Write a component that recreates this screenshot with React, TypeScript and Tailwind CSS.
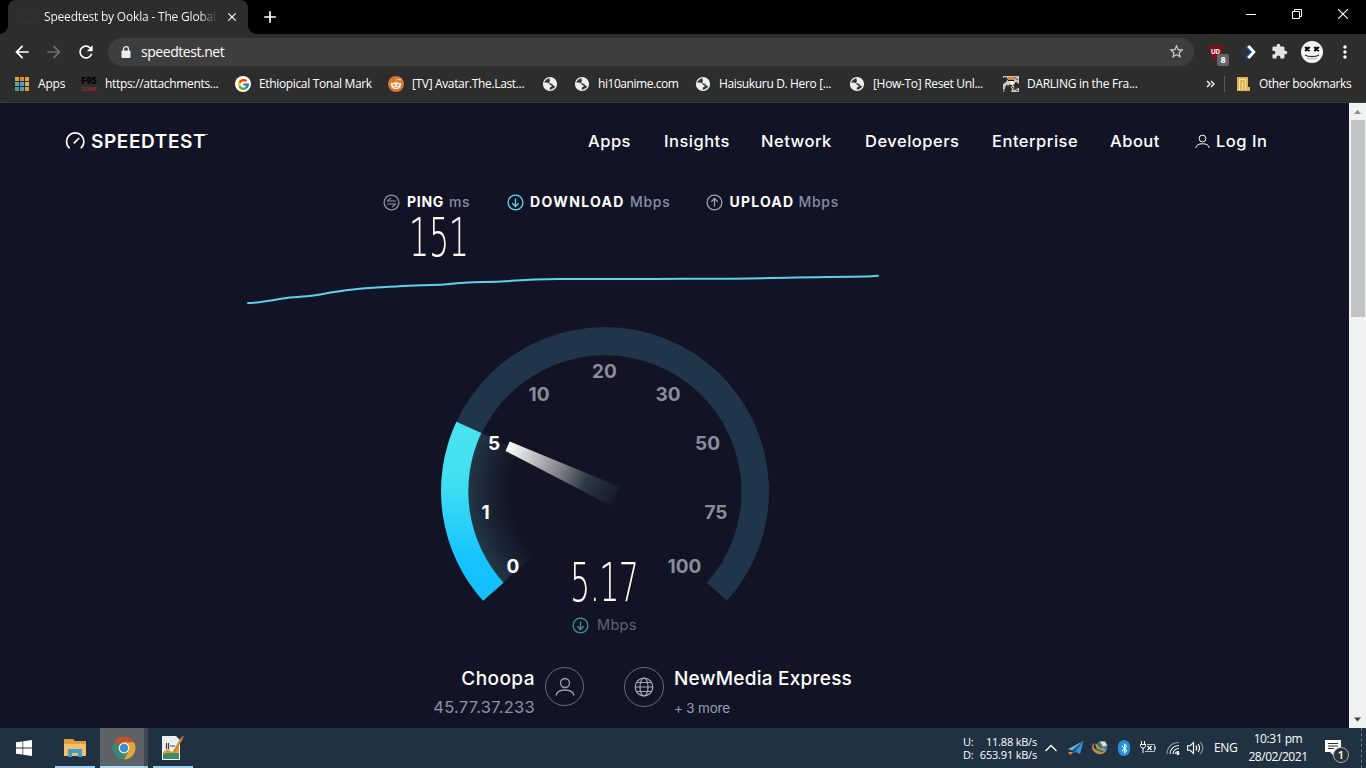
import type { ReactNode } from 'react';
import {
  MdArrowBack,
  MdArrowForward,
  MdRefresh,
  MdStarBorder,
  MdExtension,
  MdMoreVert,
  MdClose,
  MdAdd,
} from 'react-icons/md';
import { FcGoogle } from 'react-icons/fc';
import { FaRedditAlien, FaBluetoothB } from 'react-icons/fa';

/* ---------- Bookmark icons ---------- */

const appsColors = ['#e0a040', '#d98a35', '#e0a040', '#5aa9a0', '#4aa3d8', '#d9b060', '#3f9f95', '#4fa0a8', '#d9a040'];

function AppsIcon() {
  return (
    <div className="ml-[1px] grid w-[14px] grid-cols-3 gap-[1px]">
      {appsColors.map((color, i) => (
        <span key={i} className="size-[4px]" style={{ background: color }} />
      ))}
    </div>
  );
}

function F95Icon() {
  return (
    <div className="flex w-4 flex-col items-center font-['Roboto',sans-serif] font-black leading-none">
      <span className="text-[9px] leading-[9px] tracking-[-0.2px] text-black">F95</span>
      <span className="text-[6px] leading-[6px] text-[#8c2a2e]">ZONE</span>
    </div>
  );
}

function GoogleIcon() {
  return (
    <span className="flex size-4 items-center justify-center rounded-full bg-white">
      <FcGoogle size={13} />
    </span>
  );
}

function RedditIcon() {
  return (
    <span className="flex size-4 items-center justify-center rounded-full bg-[#d9762c]">
      <FaRedditAlien size={12} className="text-[#fbe9da]" />
    </span>
  );
}

function GlobeIcon() {
  return (
    <svg width="16" height="16" viewBox="0 0 16 16">
      <circle cx="8" cy="8" r="7.100" fill="#efefef" />
      <path
        d="M7.800 2.200C5 2.300 2.600 4.300 2.200 7c1.500-.6 3.500-.6 4.600.2.900.7.700 1.500 1.500 1.800.9.300 1.500.300 1.400 1.200l-1.900 1.500v2c2.300.1 4.500-1.400 5.500-3.600l-1.800-.4c-.8-.3-.6-1.600-1.600-1.900-.9-.2-2.500 0-2.700-1.200-.1-.9 1-1 .8-1.900-.2-.7-.9-.8-.2-2.500z"
        fill="#353535"
      />
    </svg>
  );
}

function AnimeIcon() {
  return (
    <svg width="16" height="16" viewBox="0 0 16 16">
      <rect width="16" height="16" fill="#c9c5c1" />
      <path d="M0 2l3-1 2 2-2 3-3 2zM10 8l3-2 3 2v4l-4 1zM3 9l4 1 2 3-1 3H1l1-3z" fill="#2b2a2d" />
      <path d="M5 1h5l2 3-3 2-4-1z" fill="#d9863c" />
      <path d="M6 5h4l2 3-4 1z" fill="#f7eee4" />
      <path d="M0 15l6-5h3M9 11l6 4M11 1l4 3M1 1l3 2M10 14l5-3" stroke="#3a3638" strokeWidth="1" fill="none" />
      <path d="M5 4.500h6M6 9l3 1" stroke="#151517" strokeWidth="1.200" />
    </svg>
  );
}

const bookmarks: { label: string; icon: ReactNode; width: string; tracking: string }[] = [
  { label: 'Apps', icon: <AppsIcon />, width: 'w-[67px]', tracking: 'tracking-[-0.2px]' },
  { label: 'https://attachments...', icon: <F95Icon />, width: 'w-[154px]', tracking: 'tracking-[-0.33px]' },
  { label: 'Ethiopical Tonal Mark', icon: <GoogleIcon />, width: 'w-[153px]', tracking: 'tracking-[-0.35px]' },
  { label: '[TV] Avatar.The.Last...', icon: <RedditIcon />, width: 'w-[154px]', tracking: 'tracking-[-0.35px]' },
  { label: '', icon: <GlobeIcon />, width: 'w-[32px]', tracking: '' },
  { label: 'hi10anime.com', icon: <GlobeIcon />, width: 'w-[121px]', tracking: 'tracking-[-0.45px]' },
  { label: 'Haisukuru D. Hero [...', icon: <GlobeIcon />, width: 'w-[154px]', tracking: 'tracking-[-0.35px]' },
  { label: '[How-To] Reset Unl...', icon: <GlobeIcon />, width: 'w-[154px]', tracking: 'tracking-[-0.32px]' },
  { label: 'DARLING in the Fra...', icon: <AnimeIcon />, width: 'w-[154px]', tracking: 'tracking-[-0.28px]' },
];

/* ---------- Browser chrome ---------- */

function TabStrip() {
  return (
    <div className="flex h-[34px] bg-black pl-2">
      <div className="relative flex w-60 items-center rounded-t-lg bg-[#2d2d2d] pl-3">
        <span className="absolute bottom-0 -left-2 size-2 bg-[radial-gradient(circle_at_0_0,#000_7.5px,#2d2d2d_8px)]" />
        <span className="absolute -right-2 bottom-0 size-2 bg-[radial-gradient(circle_at_100%_0,#000_7.5px,#2d2d2d_8px)]" />
        <span className="size-[14px] rounded-full border border-dotted border-[#3b3b3b]" />
        <span className="ml-[10px] w-[173px] overflow-hidden bg-gradient-to-r from-white from-90% to-[#2d2d2d] bg-clip-text text-[12px] tracking-[-0.19px] whitespace-nowrap text-transparent">
          Speedtest by Ookla - The Global
        </span>
        <MdClose size={14} className="ml-2 text-white" />
      </div>
      <div className="ml-[12px] flex items-center">
        <MdAdd size={20} className="text-white" />
      </div>
      <div className="ml-auto flex h-7 items-center gap-9 pr-[18px]">
        <svg width="10" height="10" stroke="#fff">
          <path d="M0 5.500h10" />
        </svg>
        <svg width="10" height="10" stroke="#fff" fill="none">
          <path d="M0.500 2.500h7v7h-7zM2.500 2.500v-2h7v7h-2" />
        </svg>
        <svg width="10" height="10" stroke="#fff" strokeWidth="1.100">
          <path d="M0 0l10 10M10 0l-10 10" />
        </svg>
      </div>
    </div>
  );
}

function UBlockIcon() {
  return (
    <div className="relative size-4">
      <svg width="16" height="16" viewBox="0 0 16 16">
        <path d="M8 0c2 1.500 4.500 2 7.200 2 0 6-1 11-7.200 14C1.800 13 .8 8 .8 2 3.500 2 6 1.500 8 0z" fill="#7d1019" />
      </svg>
      <span className="absolute top-[4px] left-[3px] font-['Roboto',sans-serif] text-[7px] leading-[8px] font-bold text-white">UD</span>
      <span className="absolute top-[10px] left-[9px] flex h-3 w-3 items-center justify-center rounded-[2px] bg-[#61666b] font-['Open_Sans',sans-serif] text-[9px] font-bold text-white">
        8
      </span>
    </div>
  );
}

function AvatarIcon() {
  return (
    <svg width="22" height="22" viewBox="0 0 22 22">
      <circle cx="11" cy="11" r="11" fill="#f4f4f4" />
      <path d="M4.200 6l4.400 4M8.600 6l-4.400 4M13.400 6l4.400 4M17.800 6l-4.400 4" stroke="#000" strokeWidth="2.300" />
      <path d="M4 14c3.500 2.200 10.500 2.200 14 0" stroke="#333" strokeWidth="1.200" fill="none" />
      <path d="M6 16.800c3 1.500 7 1.500 10 0" stroke="#aaa" strokeWidth="1" fill="none" />
    </svg>
  );
}

function Toolbar() {
  return (
    <div className="flex h-[35px] items-center bg-[#2d2d2d] pl-[12px] text-white">
      <MdArrowBack size={20} />
      <MdArrowForward size={20} className="ml-[12px] text-[#6d6d70]" />
      <MdRefresh size={20} className="ml-[12px]" />
      <div className="ml-[12px] flex h-7 w-[1086px] items-center rounded-full bg-[#3e3e3e] pr-[9px] pl-[13px]">
        <svg width="10" height="12" viewBox="0 0 10 12">
          <path d="M2.500 5V3.200a2.500 2.500 0 0 1 5 0V5" fill="none" stroke="#ededed" strokeWidth="1.300" />
          <rect x="0.500" y="4.500" width="9" height="7.500" rx="1" fill="#ededed" />
        </svg>
        <span className="ml-[10px] text-[14px] tracking-[-0.450px]">speedtest.net</span>
        <MdStarBorder size={17} className="ml-auto text-[#d0d0d0]" />
      </div>
      <div className="ml-[14px] flex items-center">
        <UBlockIcon />
        <svg width="16" height="16" className="ml-[18px]" fill="none">
          <path d="M5 2l5.500 6L5 14" stroke="#2f6fc4" strokeWidth="3" />
          <path d="M6.500 2L12 8l-5.500 6" stroke="#fff" strokeWidth="2.600" />
          <path d="M0 5.500h5M0 8h6M0 10.500h5" stroke="#24436d" strokeDasharray="2 1" />
        </svg>
        <MdExtension size={17} className="ml-[13px] text-[#e4e4e4]" />
        <span className="ml-[13px]">
          <AvatarIcon />
        </span>
        <MdMoreVert size={20} className="ml-[12px]" />
      </div>
    </div>
  );
}

function BookmarksBar() {
  return (
    <div className="flex h-[34px] items-center border-b border-dotted border-[#45454d] bg-[#2d2d2d] pb-[3px] pl-[14px] text-[12px] text-white">
      {bookmarks.map((b, i) => (
        <div key={i} className={`flex shrink-0 items-center gap-2 whitespace-nowrap ${b.width}`}>
          <span className="flex w-4 shrink-0">{b.icon}</span>
          {b.label && <span className={b.tracking}>{b.label}</span>}
        </div>
      ))}
      <svg width="9" height="8" className="ml-auto" fill="none" stroke="#e8e8e8" strokeWidth="1.500">
        <path d="M1 1l3 3-3 3M5 1l3 3-3 3" />
      </svg>
      <span className="ml-[9px] h-4 w-px bg-[#5c5c5c]" />
      <svg width="13" height="15" className="ml-[12px]">
        <path d="M0 0h11v10h2v4H0z" fill="#e6b355" />
        <path d="M2.500 13V2.500h6V13M5.500 12V5" stroke="#f9e2ac" fill="none" />
      </svg>
      <span className="mr-[15px] ml-[9px] w-[92px] tracking-[-0.42px] whitespace-nowrap">Other bookmarks</span>
    </div>
  );
}

/* ---------- Speedtest page ---------- */

const navItems = [
  { label: 'Apps', width: 'w-11' },
  { label: 'Insights', width: 'w-[65px]' },
  { label: 'Network', width: 'w-[72px]' },
  { label: 'Developers', width: 'w-[95px]' },
  { label: 'Enterprise', width: 'w-[86px]' },
  { label: 'About', width: 'w-[53px]' },
];

function UserIcon({ size, className }: { size: number; className?: string }) {
  return (
    <svg width={size} height={size} viewBox="0 0 20 20" fill="none" stroke="currentColor" strokeWidth="1.300" className={className}>
      <circle cx="10" cy="6" r="4.500" />
      <path d="M1 18.500c.8-4 4-5.500 9-5.500s8.200 1.500 9 5.500" />
    </svg>
  );
}

function Header() {
  return (
    <header className="flex h-[76px] items-center pl-[65px]">
      <svg width="20" height="18" viewBox="0 0 20 18" fill="none" stroke="#fff" strokeWidth="1.700">
        <path d="M4.600 16.300A8.700 8.700 0 1 1 15.800 16.300" />
        <path d="M8.800 11.300l5.400-5.300" />
      </svg>
      <span className="mt-[2px] ml-[6px] flex w-[118px] text-[19px] font-semibold tracking-[0.600px] text-white">
        SPEEDTEST
        <span className="mt-[6px] -ml-px h-px w-[3px] bg-white/60" />
      </span>
      <nav className="ml-[379px] flex items-center gap-8 text-[16.500px] font-medium tracking-[0.500px] whitespace-nowrap text-white">
        {navItems.map((item) => (
          <a key={item.label} className={item.width}>
            {item.label}
          </a>
        ))}
        <a className="flex items-center gap-[6px]">
          <UserIcon size={15} />
          Log In
        </a>
      </nav>
    </header>
  );
}

function DirectionIcon({ kind, className }: { kind: 'ping' | 'down' | 'up'; className: string }) {
  return (
    <svg width="17" height="17" viewBox="0 0 17 17" fill="none" stroke="currentColor" strokeWidth="1.300" className={className}>
      <circle cx="8.500" cy="8.500" r="7.400" />
      {kind === 'ping' && <path d="M13 7H4.500L8 3.800M4 10h8.500L9 13.200" strokeWidth="1.100" />}
      {kind === 'down' && <path d="M8.500 4.500v8M5.300 9.300l3.200 3.200 3.200-3.200" />}
      {kind === 'up' && <path d="M8.500 12.500v-8M5.300 7.700l3.200-3.200 3.200 3.200" />}
    </svg>
  );
}

function Stats() {
  return (
    <div className="ml-[382.500px] flex h-4 items-center text-[14px] leading-4 font-bold whitespace-nowrap text-white">
      <DirectionIcon kind="ping" className="text-[#8d8fa3]" />
      <span className="ml-[7.500px] w-[42px] tracking-[0.700px]">PING</span>
      <span className="w-[57.500px] font-medium tracking-[0.500px] text-[#8390a6]">ms</span>
      <DirectionIcon kind="down" className="text-[#5fd8ef]" />
      <span className="ml-[6.500px] w-[100px] tracking-[1.350px]">DOWNLOAD</span>
      <span className="w-[75.500px] font-medium tracking-[0.700px] text-[#8390a6]">Mbps</span>
      <DirectionIcon kind="up" className="text-[#9da0b2]" />
      <span className="ml-[7px] w-[69px] tracking-[1.200px]">UPLOAD</span>
      <span className="font-medium tracking-[0.700px] text-[#8390a6]">Mbps</span>
    </div>
  );
}

function PingGraph() {
  return (
    <svg width="640" height="40" viewBox="240 270 640 40" className="mt-[9px] ml-[240px] block">
      <path
        d="M248 303C256 303 268 301 281 298.700S302 297 311.500 295.700 330 292.500 346 290.300 380 287.500 399 286.300 438 285.500 452 283.700 490 282.300 505 281.300 530 279.300 558 279 630 279.200 656 279 740 278.800 770 278 830 276.900 852 276.700 872 276.200 878 275.800"
        fill="none"
        stroke="#5cd3e8"
        strokeWidth="2"
        strokeLinecap="round"
      />
    </svg>
  );
}

const marks = [
  { value: '0', x: 513, y: 573, active: true },
  { value: '1', x: 485.500, y: 519, active: true },
  { value: '5', x: 494, y: 450, active: true },
  { value: '10', x: 539, y: 401, active: false },
  { value: '20', x: 604.500, y: 378, active: false },
  { value: '30', x: 668, y: 401, active: false },
  { value: '50', x: 707.500, y: 450, active: false },
  { value: '75', x: 716, y: 519, active: false },
  { value: '100', x: 684.500, y: 573, active: false },
];

function Gauge() {
  return (
    <div className="relative mt-[10px] ml-[430px] h-[290px] w-[350px]">
      <svg width="350" height="290" viewBox="430 320 350 290" className="block">
        <defs>
          <linearGradient id="active" x1="0" y1="0" x2="0" y2="1">
            <stop offset="0" stopColor="#4be3ef" />
            <stop offset="0.350" stopColor="#3fdff2" />
            <stop offset="0.750" stopColor="#17c4ff" />
            <stop offset="1" stopColor="#15bfff" />
          </linearGradient>
          <radialGradient id="glow" gradientUnits="userSpaceOnUse" cx="605" cy="491" r="137">
            <stop offset="0.680" stopColor="#213342" stopOpacity="0" />
            <stop offset="0.850" stopColor="#213342" stopOpacity="0.500" />
            <stop offset="1" stopColor="#233846" />
          </radialGradient>
          <linearGradient id="needle" gradientUnits="userSpaceOnUse" x1="507" y1="446" x2="616" y2="497">
            <stop offset="0" stopColor="#fff" />
            <stop offset="0.120" stopColor="#e2e2e4" />
            <stop offset="0.500" stopColor="#7b7d86" />
            <stop offset="0.720" stopColor="#2a3944" />
            <stop offset="1" stopColor="#151a29" />
          </linearGradient>
        </defs>
        <path d="M483.100 600.700A164 164 0 1 1 726.900 600.700L706.800 582.700A136.500 136.500 0 1 0 503.200 582.700Z" fill="#20344a" />
        <path d="M503.200 582.700A137 137 0 0 1 480.900 433.100L518 450A96 96 0 0 0 533.500 555Z" fill="url(#glow)" />
        <path d="M483.100 600.700A164 164 0 0 1 456.400 421.700L481.300 433.100A136.500 136.500 0 0 0 503.500 582.700Z" fill="url(#active)" />
        <path d="M509.700 441.500L619.500 486.700 612 506.300 505.500 451Z" fill="url(#needle)" />
        {marks.map((m) => (
          <text
            key={m.value}
            x={m.x}
            y={m.y}
            textAnchor="middle"
            className={`text-[19px] font-bold ${m.active ? 'fill-white' : 'fill-[#8b8c9b]'}`}
          >
            {m.value}
          </text>
        ))}
      </svg>
      <div className="absolute top-[238px] left-[140px] w-[70px]">
        <span className="block origin-left scale-x-[0.600] font-['DejaVu_Sans',sans-serif] text-[53px] leading-[50px] font-extralight tracking-[-1px] text-white">
          5.17
        </span>
      </div>
    </div>
  );
}

function ServerInfo() {
  return (
    <div className="mt-[30px] flex h-14 whitespace-nowrap">
      <div className="flex w-[535px] flex-col items-end">
        <span className="text-[19px] leading-7 font-medium tracking-[0.450px] text-white">Choopa</span>
        <span className="text-[16.500px] leading-7 tracking-[0.250px] text-[#8f91a6]">45.77.37.233</span>
      </div>
      <div className="mt-[2px] ml-[10px] flex size-[39px] items-center justify-center rounded-full border border-[#696b79] text-[#a3a5b3]">
        <UserIcon size={20} />
      </div>
      <div className="mt-[2px] ml-[40px] flex size-10 items-center justify-center rounded-full border border-[#696b79]">
        <svg width="20" height="20" viewBox="0 0 20 20" fill="none" stroke="#a3a5b3" strokeWidth="1.200">
          <circle cx="10" cy="10" r="8.800" />
          <ellipse cx="10" cy="10" rx="4" ry="8.800" />
          <path d="M1.200 10h17.600M2.500 5.500h15M2.500 14.500h15" />
        </svg>
      </div>
      <div className="ml-[10px] flex flex-col">
        <span className="text-[19px] leading-7 font-medium tracking-[0.240px] text-white">NewMedia Express</span>
        <span className="mt-px text-[13.500px] leading-7 tracking-[-0.200px] text-[#8fa0ae]">+ 3 more</span>
      </div>
    </div>
  );
}

function Scrollbar() {
  return (
    <div className="flex w-[17px] flex-col items-center justify-between bg-[#f1f3f3]">
      <div className="flex w-full flex-col items-center">
        <svg width="17" height="17">
          <path d="M5 11l3.500-4 3.500 4z" fill="#8b8f8f" />
        </svg>
        <div className="h-[197px] w-[14px] bg-[#c1c4c4]" />
      </div>
      <svg width="17" height="17">
        <path d="M5 6.500h7l-3.500 4z" fill="#3e4242" />
      </svg>
    </div>
  );
}

function SpeedtestPage() {
  return (
    <div className="flex h-[625px] bg-[#121324] font-['Inter',sans-serif]">
      <main className="w-[1349px] overflow-hidden">
        <Header />
        <div className="mt-[15px]">
          <Stats />
        </div>
        <div className="mt-[5px] ml-[409px] h-[46px] w-[60px]">
          <span className="block origin-left scale-x-[0.600] font-['DejaVu_Sans',sans-serif] text-[53px] leading-[46px] font-extralight tracking-[-0.500px] text-white">
            151
          </span>
        </div>
        <PingGraph />
        <Gauge />
        <div className="mt-[5px] ml-[572px] flex h-5 items-center gap-2 text-[14.500px] tracking-[0.300px] text-[#5f6270]">
          <DirectionIcon kind="down" className="text-[#3f9391]" />
          Mbps
        </div>
        <ServerInfo />
      </main>
      <Scrollbar />
    </div>
  );
}

/* ---------- Windows taskbar ---------- */

function TaskButtons() {
  return (
    <div className="flex h-full">
      <div className="flex w-[55px] items-center pl-4">
        <svg width="16" height="16" fill="#fff">
          <path d="M0 2.300l6.500-.9v6.200H0zM7.200 1.300L16 0v7.600H7.200zM0 8.400h6.500v6.200L0 13.700zM7.200 8.400H16V16l-8.800-1.300z" />
        </svg>
      </div>
      <div className="flex w-10 items-center justify-center border-b-2 border-[#9fcdee]">
        <svg width="22" height="20" viewBox="0 0 22 20" className="mt-[2px]">
          <path d="M0 1h9l2 2h11v15H0z" fill="#dca03e" />
          <path d="M0 6h22v12H0z" fill="#f2c069" />
          <path d="M4 19v-8h14v8h-4v-4H8v4z" fill="#3f9ed0" />
        </svg>
      </div>
      <div className="ml-[5px] flex w-11 items-center justify-center border-b-2 border-[#b4dcf5] bg-[#5d6266] pl-[3px]">
        <svg width="24" height="24" viewBox="0 0 24 24" className="mt-[2px]">
          <path d="M12 12L2.050 6.250A11.500 11.500 0 0 1 21.950 6.250L22 7H12z" fill="#c4502c" />
          <path d="M12 12L2.050 6.250A11.500 11.500 0 0 0 12 23.500L17 14z" fill="#3b8579" />
          <path d="M12 23.500A11.500 11.500 0 0 0 21.950 6.250H12L17 14z" fill="#e2a63a" />
          <circle cx="12" cy="12" r="5.400" fill="#f1efe8" />
          <circle cx="12" cy="12" r="4.200" fill="#3a8ed0" />
        </svg>
      </div>
      <div className="w-1 border-b-2 border-[#9fcdee] bg-[#3e474f]" />
      <div className="ml-[5px] flex w-10 items-center justify-center border-b-2 border-[#9fcdee]">
        <svg width="24" height="24" viewBox="0 0 24 24" className="mt-[2px]">
          <path d="M1 0h14l4 4v20H1z" fill="#eef0ee" />
          <path d="M2 16l5-3 4 3 7-7v14H2z" fill="#dc9a35" />
          <path d="M2 18c5-2 10 0 16-1v6H2z" fill="#3e8a6e" />
          <path d="M5.500 7v6M7.500 7v6M9 10h5" stroke="#3a3a3a" strokeWidth="1.200" />
          <path d="M13 16L21 2" stroke="#c98634" strokeWidth="2.400" />
          <path d="M20.500 3l1.800-3" stroke="#80616c" strokeWidth="2.400" />
        </svg>
      </div>
    </div>
  );
}

function Tray() {
  return (
    <div className="ml-auto flex h-full items-center text-[12px] text-white">
      <div className="grid w-[74px] grid-cols-[auto_1fr] text-right text-[11px] leading-[13px] tracking-[-0.200px]">
        <span>U:</span>
        <span>11.88 kB/s</span>
        <span>D:</span>
        <span>653.91 kB/s</span>
      </div>
      <svg width="12" height="8" className="ml-[8px]" fill="none" stroke="#fff" strokeWidth="1.300">
        <path d="M0.500 7L6 1.500 11.500 7" />
      </svg>
      <svg width="16" height="14" viewBox="0 0 16 14" className="ml-[11px]">
        <path d="M15.500 0L0 8l4 1.500z" fill="#6cb6e4" />
        <path d="M15.500 0L5 9.500 12 13z" fill="#3f97d2" />
        <path d="M15.500 0L4 9.500 6 13z" fill="#22618f" />
        <path d="M0 11h5l-2.500 3z" fill="#e08a34" />
      </svg>
      <svg width="16" height="16" viewBox="0 0 16 16" className="ml-[8px]">
        <circle cx="10" cy="6.500" r="5.500" fill="#3f84b0" />
        <path d="M8 1.500l5 0 2 4-4 1z" fill="#e6dfc0" />
        <path d="M6 3l3 1 1 5 3 3-5 1-5-3z" fill="#3d7361" />
        <path d="M3 3C0 6 2 10 7 11.500c3 1 6 0 8-2-2 5-8 6-12 3S-1 4 3 3z" fill="#c78b52" />
        <path d="M4 4c0 3 3 5 9 6" stroke="#e9a04a" strokeWidth="1.400" fill="none" />
      </svg>
      <span className="ml-[10px] flex h-[16px] w-3 items-center justify-center rounded-[6px] bg-[#2390d8]">
        <FaBluetoothB size={11} />
      </span>
      <svg width="17" height="14" viewBox="0 0 17 14" className="ml-[10px]" fill="none" stroke="#fff">
        <path d="M1.500 0v3M4.500 0v3M0.500 3.500h5v2l-1.500 1.500h-2L.5 5.500zM3 7v5" />
        <path d="M7 3.500h7.500v7H5" stroke="#b5bdc5" />
        <path d="M15.500 5.500v3" stroke="#b5bdc5" />
        <path d="M7.500 5l4 4M11.500 5l-4 4" strokeWidth="1.200" />
      </svg>
      <svg width="14" height="14" viewBox="0 0 14 14" className="ml-[9px]" fill="none" stroke="#fff" strokeWidth="1.100">
        <path d="M1 13C1 6 6 1.500 13 1.500" stroke="#8d98a3" />
        <path d="M4 13c0-5 4-8.500 9-8.500" />
        <path d="M7 13c0-3 2.500-5.500 6-5.500" />
        <path d="M9.500 13c0-1.500 1.500-2.500 3.500-2.500" />
        <circle cx="12" cy="12.500" r="1" fill="#fff" />
      </svg>
      <svg width="17" height="14" viewBox="0 0 17 14" className="ml-[7px]" fill="none" stroke="#fff" strokeWidth="1.100">
        <path d="M.6 4.700h2.600L6.500 1.500v11L3.200 9.300H.6z" />
        <path d="M8.800 4.700c1.200 1.400 1.200 3.200 0 4.600M11 3c2 2.500 2 5.500 0 8" />
        <path d="M13.300 1.200c3.200 3.600 3.200 8 0 11.600" stroke="#8d98a3" />
      </svg>
      <span className="ml-[10px] w-[24px] tracking-[-0.300px]">ENG</span>
      <div className="ml-[9px] flex w-[62px] flex-col items-center leading-[18px] tracking-[-0.450px] whitespace-nowrap">
        <span>10:31 pm</span>
        <span>28/02/2021</span>
      </div>
      <div className="relative ml-[16px] h-4 w-[17px]">
        <svg width="17" height="16">
          <path d="M0 0h16v12H9v4l-4-4H0z" fill="#fff" />
          <path d="M3 3.500h10M3 6h10M3 8.500h6" stroke="#1f3042" />
        </svg>
        <span className="absolute top-[7px] left-[8px] flex size-4 items-center justify-center rounded-full border border-[#a9adb1] bg-[#2e3236] text-[11px] font-semibold">
          1
        </span>
      </div>
      <span className="mr-1 ml-[19px] h-full border-l border-dashed border-[#66737f]" />
    </div>
  );
}

export default function App() {
  return (
    <div className="flex h-[768px] w-[1366px] flex-col overflow-hidden bg-black font-['Open_Sans','Noto_Sans',sans-serif]">
      <TabStrip />
      <Toolbar />
      <BookmarksBar />
      <SpeedtestPage />
      <div className="flex h-10 bg-[#203142]">
        <TaskButtons />
        <Tray />
      </div>
    </div>
  );
}
